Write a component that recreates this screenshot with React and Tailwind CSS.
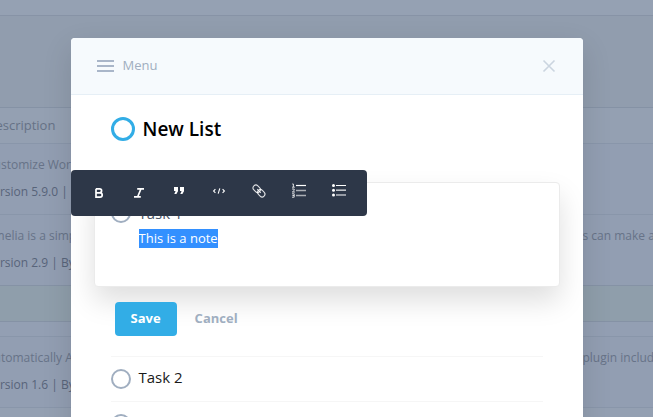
import { useState } from 'react';

const toolbarItems = [
  {
    label: 'Bold',
    icon: (
      <path
        d="M7 5.8h3.6a1.9 1.9 0 0 1 0 4H7m0 0h4a2.1 2.1 0 0 1 0 4.4H7V5.8"
        fill="none"
        stroke="currentColor"
        strokeWidth="1.7"
      />
    ),
  },
  {
    label: 'Italic',
    icon: (
      <path
        d="M8.2 5.8H15M5 13.8h6.8M12 5.8l-3.3 8"
        fill="none"
        stroke="currentColor"
        strokeWidth="1.7"
      />
    ),
  },
  {
    label: 'Quote',
    icon: (
      <path
        d="M5 4h4v4.2L7.4 11H5.3l1.3-3H5zM11 4h4v4.2L13.4 11h-2.1l1.3-3H11z"
        fill="currentColor"
      />
    ),
  },
  {
    label: 'Code',
    icon: (
      <path
        d="M6.4 6.2 4.6 8l1.8 1.8M13.6 6.2 15.4 8l-1.8 1.8M10.8 5.4l-1.6 5.2"
        fill="none"
        stroke="currentColor"
        strokeWidth="1.1"
      />
    ),
  },
  {
    label: 'Link',
    icon: (
      <g
        fill="none"
        stroke="currentColor"
        strokeWidth="1.1"
        strokeOpacity="0.85"
        transform="rotate(45 10 8)"
      >
        <rect x="2.8" y="5.2" width="8" height="5.6" rx="2.8" />
        <rect x="9.2" y="5.2" width="8" height="5.6" rx="2.8" />
        <path d="M7.5 8h5" />
      </g>
    ),
  },
  {
    label: 'Numbered list',
    icon: (
      <g fill="none" stroke="currentColor">
        <path d="M7 2.5h10" strokeWidth="1.2" />
        <path d="M7 7.5h10M7 12.5h10" strokeWidth="1.6" strokeOpacity="0.6" />
        <path d="M3.2 1h1.2v3M3 4.2h2.8M3 6h2.2v1.4L3.3 9H6M3 10.8h2.2v3.4H3M3.4 12.5h1.8" strokeWidth="0.8" />
      </g>
    ),
  },
  {
    label: 'Bulleted list',
    icon: (
      <g fill="currentColor">
        <circle cx="4.5" cy="2.5" r="1.5" />
        <circle cx="4.5" cy="7.2" r="1.5" />
        <circle cx="4.5" cy="12" r="1.5" />
        <path d="M7 2h10v1.1H7zM7 11.5h10v1.1H7z" />
        <path d="M7 6.4h10V8H7z" fillOpacity="0.7" />
      </g>
    ),
  },
];

function PluginRow({ text, aside, meta }) {
  return (
    <tr className="border-t border-[#8996aa] bg-[#929eb2]">
      <td className="h-[71px] p-0 pt-[7px] align-top">
        <div className="grid grid-cols-[1fr_512px_1fr] leading-[27px] whitespace-nowrap">
          <div className="-ml-3.5 overflow-hidden">
            <p className="text-[#677388]">{text}</p>
            <p className="text-[#58647a]">{meta}</p>
          </div>
          <span />
          <p className="overflow-hidden text-[#677388]">{aside}</p>
        </div>
      </td>
    </tr>
  );
}

function PluginsPage() {
  return (
    <div className="bg-[#919dae] text-[12px]">
      <div className="h-4 border-b border-[#8793a6] bg-[#95a1b3]" />
      <table className="mt-[91px] w-full table-fixed border-collapse">
        <thead>
          <tr className="border-t border-[#8592a5] bg-[#94a0b2]">
            <th className="h-9 p-0 text-left text-[13px] font-normal text-[#667286]">
              <span className="-ml-3.5">Description</span>
            </th>
          </tr>
        </thead>
        <tbody>
          <PluginRow text="Customize WordPress" meta="Version 5.9.0 | By" />
          <PluginRow text="Amelia is a simple" meta="Version 2.9 | By" aside="s can make a booking" />
          <tr className="border-y border-[#8592a5] bg-[#8f9eab]">
            <td className="h-9 p-0" />
          </tr>
          <tr className="bg-[#939fb3]">
            <td className="h-[15px] p-0" />
          </tr>
          <PluginRow text="Automatically Add" meta="Version 1.6 | By" aside="plugin includes" />
          <tr className="border-t border-[#8996aa] bg-[#94a0b2]">
            <td className="h-9 p-0" />
          </tr>
        </tbody>
      </table>
    </div>
  );
}

function Toolbar() {
  return (
    <div
      role="toolbar"
      aria-label="Formatting"
      className="absolute top-[132px] left-0 flex h-[46px] items-center rounded bg-[#2d3748] px-2 text-white"
    >
      {toolbarItems.map((item) => (
        <button key={item.label} aria-label={item.label} className="flex w-10 justify-center">
          <svg viewBox="0 0 20 20" className="h-5 w-5">
            {item.icon}
          </svg>
        </button>
      ))}
    </div>
  );
}

function Task({ name, checked, onChange, textClass }) {
  return (
    <label className="flex h-6 items-center gap-2">
      <input
        type="checkbox"
        checked={checked}
        onChange={onChange}
        className="h-5 w-5 shrink-0 appearance-none rounded-full border-2 border-[#a0aec0] bg-white checked:bg-[#a0aec0]"
      />
      <span className={`text-[15px] leading-5 ${textClass}`}>{name}</span>
    </label>
  );
}

export default function App() {
  const [done, setDone] = useState({});
  const toggle = (name) => setDone((d) => ({ ...d, [name]: !d[name] }));

  return (
    <div className="relative h-screen overflow-hidden bg-[#919dae] font-['Open_Sans',sans-serif]">
      <PluginsPage />

      {/* Modal */}
      <div className="absolute inset-0 overflow-hidden pt-[38px]">
        <div
          role="dialog"
          aria-label="New List"
          className="relative mx-auto min-h-full max-w-lg rounded bg-white shadow-[0_10px_30px_rgba(0,0,0,0.12)]"
        >
          <header className="flex h-[57px] items-center justify-between rounded-t border-b border-[#e6eff6] bg-[#f6fafd] px-[26px]">
            <button className="flex items-center gap-[9px] text-[13px] font-medium text-[#a0aec0]">
              <svg viewBox="0 0 17 12" className="h-3 w-[17px]">
                <path d="M0 1h17M0 6h17M0 11h17" stroke="#a9b6c9" strokeWidth="2" />
              </svg>
              Menu
            </button>
            <button aria-label="Close" className="text-[#cbd5e0]">
              <svg viewBox="0 0 16 16" className="h-4 w-4">
                <path d="m2.5 2.5 11 11m0-11-11 11" stroke="currentColor" strokeWidth="1.6" />
              </svg>
            </button>
          </header>

          <main className="px-10 pt-5">
            <div className="flex h-7 items-center gap-2">
              <span className="h-6 w-6 rounded-full border-[3px] border-[#32ade6]" />
              <h1 className="text-[19px] font-semibold text-black">New List</h1>
            </div>

            <section className="-mx-[17px] mt-[39px] h-[105px] rounded border border-[#ebebeb] bg-white px-4 pt-[18px] shadow-[0_14px_28px_rgba(0,0,0,0.13)]">
              <Task
                name="Task 1"
                checked={!!done['Task 1']}
                onChange={() => toggle('Task 1')}
                textClass="text-[#4a5568]"
              />
              <p className="ml-7 pt-1 text-[13px] leading-[19px]">
                <mark className="inline-block bg-[#3390ff] text-white">This is a note</mark>
              </p>
            </section>

            <div className="mt-[15px] flex items-center gap-[18px] pl-1 text-[13px] font-bold">
              <button className="h-[34px] rounded bg-[#32ade6] px-4 text-white">Save</button>
              <button className="text-[#a0aec0]">Cancel</button>
            </div>

            <ul className="mt-5">
              {['Task 2', 'Task 3'].map((name) => (
                <li key={name} className="border-t border-[#f6f6f6] py-2.5">
                  <Task
                    name={name}
                    checked={!!done[name]}
                    onChange={() => toggle(name)}
                    textClass="pb-1 text-[#1a1a1a]"
                  />
                </li>
              ))}
            </ul>
          </main>

          <Toolbar />
        </div>
      </div>
    </div>
  );
}
